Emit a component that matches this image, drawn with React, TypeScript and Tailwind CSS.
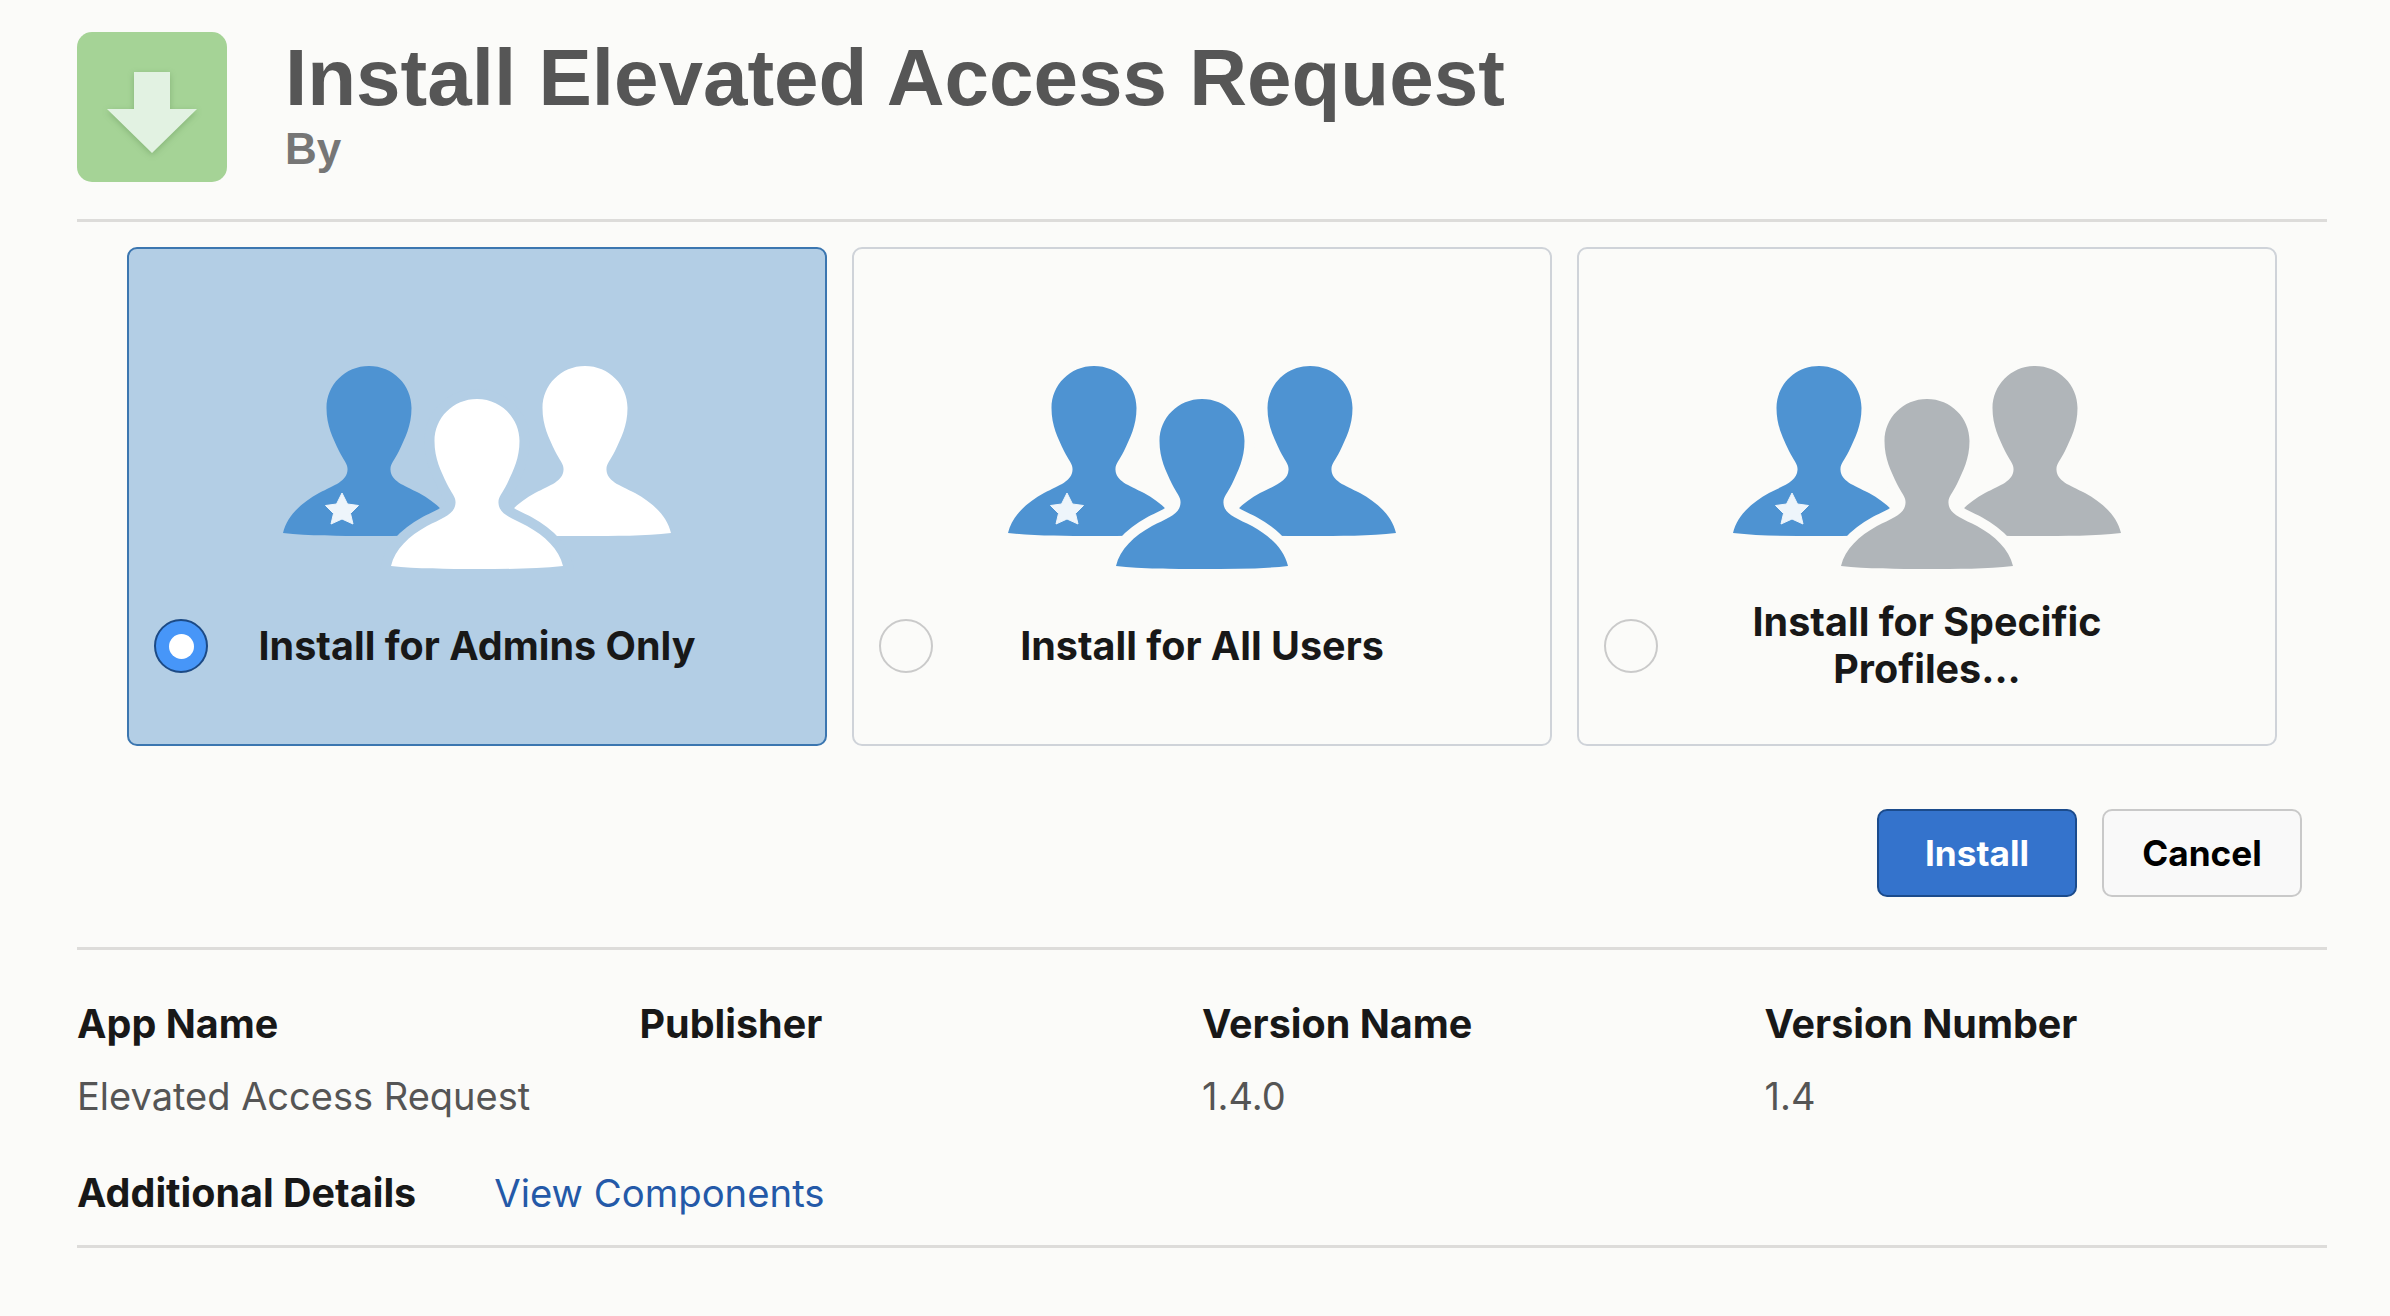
import React from 'react';

const PERSON =
  'M0 0C-24 0 -42.500 19 -42.500 42C-42.500 60 -36 72 -30 85C-25 95 -21 98 -21.500 104C-22 115 -34 119 -50 127C-68 137 -82 150 -86 167C-60 170 -30 170 0 170C30 170 60 170 86 167C82 150 68 137 50 127C34 119 22 115 21.500 104C21 98 25 95 30 85C36 72 42.500 60 42.500 42C42.500 19 24 0 0 0Z';

function PeopleIcon({ others, gap }: { others: string; gap: string }) {
  return (
    <svg width="388" height="203" viewBox="0 0 388 203" className="block">
      <path d={PERSON} transform="translate(86 0)" fill="#4e93d2" />
      <path d={PERSON} transform="translate(302 0)" fill={others} />
      <path
        d={PERSON}
        transform="translate(194 33)"
        fill={others}
        stroke={gap}
        strokeWidth="20"
        paintOrder="stroke"
      />
      <polygon
        points="59,127 64.500,138 75.500,139.500 67.500,147.500 70,158 59,153 48,158 50.500,147.500 42.500,139.500 53.500,138"
        fill="#eef5fb"
        stroke="#eef5fb"
        strokeWidth="1"
        strokeLinejoin="round"
      />
    </svg>
  );
}

function InstallCard({
  selected,
  others,
  children,
}: {
  selected?: boolean;
  others: string;
  children: React.ReactNode;
}) {
  return (
    <div
      className={`h-[499px] rounded-[10px] border-2 pt-[117px] flex flex-col items-center ${
        selected ? 'bg-[#b3cee5] border-[#3b76b0]' : 'bg-[#fbfbf9] border-[#cfd3d9]'
      }`}
    >
      <PeopleIcon others={others} gap={selected ? '#b3cee5' : '#fbfbf9'} />
      <div className="mt-[50px] w-full h-[54px] px-[25px] grid grid-cols-[54px_1fr_54px] grid-rows-[54px] items-center">
        {selected ? (
          <div className="w-[54px] h-[54px] rounded-full border-2 border-[#1c4a85] bg-[#4796f8] flex items-center justify-center">
            <div className="w-[25px] h-[25px] rounded-full bg-white" />
          </div>
        ) : (
          <div className="w-[54px] h-[54px] rounded-full border-2 border-[#cacaca]" />
        )}
        <div className="text-center text-[39.5px] leading-[47px] font-bold text-[#181818]">{children}</div>
      </div>
    </div>
  );
}

export default function App() {
  return (
    <div className="min-h-screen bg-[#fbfbf9] pl-[77px] pr-[63px] pt-[32px] pb-[68px] font-['Inter',sans-serif]">
      {/* Header */}
      <header className="flex gap-[58px] h-[190px] border-b-[3px] border-[#dddcda]">
        <div className="w-[150px] h-[150px] rounded-[15px] bg-[#a5d396] flex-shrink-0">
          <svg width="150" height="150" viewBox="0 0 150 150" className="block drop-shadow-[0_2px_3px_rgba(60,110,50,0.3)]">
            <polygon points="57,40 93,40 93,77 120,77 75,121 30,77 57,77" fill="#e2f2e2" />
          </svg>
        </div>
        <div className="font-['Liberation_Sans',Arial,sans-serif] font-bold">
          <h1 className="text-[80px] leading-[80px] mt-[6px] text-[#565656]">Install Elevated Access Request</h1>
          <h2 className="text-[44px] leading-[50px] mt-[6px] text-[#767676]">By</h2>
        </div>
      </header>

      {/* Install options */}
      <div className="mt-[25px] px-[50px] grid grid-cols-3 gap-[25px]">
        <InstallCard selected others="#ffffff">Install for Admins Only</InstallCard>
        <InstallCard others="#4e93d2">Install for All Users</InstallCard>
        <InstallCard others="#b0b5b9">
          Install for Specific
          <br />
          Profiles...
        </InstallCard>
      </div>

      <div className="mt-[63px] pr-[25px] flex justify-end gap-[25px]">
        <button className="w-[200px] h-[88px] rounded-[10px] border-2 border-[#1b4b8c] bg-[#3473cc] text-white text-[35.2px] font-bold">
          Install
        </button>
        <button className="w-[200px] h-[88px] rounded-[10px] border-2 border-[#c9c9c9] bg-[#f9f9f9] text-black text-[35.2px] font-bold">
          Cancel
        </button>
      </div>

      {/* App details */}
      <div className="mt-[50px] border-t-[3px] border-[#dddcda] pt-[50px] border-b-[3px] pb-[28px]">
        <div className="grid grid-cols-4">
          {[
            ['App Name', 'Elevated Access Request'],
            ['Publisher', ''],
            ['Version Name', '1.4.0'],
            ['Version Number', '1.4'],
          ].map(([label, value]) => (
            <div key={label}>
              <div className="text-[39.5px] leading-[48px] font-bold text-[#181818]">{label}</div>
              <div className="mt-[24px] h-[48px] text-[38px] leading-[48px] text-[#555555]">{value}</div>
            </div>
          ))}
        </div>
        <div className="mt-[49px] flex gap-[78px] leading-[48px]">
          <span className="text-[39.5px] font-bold text-[#181818]">Additional Details</span>
          <a className="text-[38.3px] text-[#2459a8]">View Components</a>
        </div>
      </div>
    </div>
  );
}
